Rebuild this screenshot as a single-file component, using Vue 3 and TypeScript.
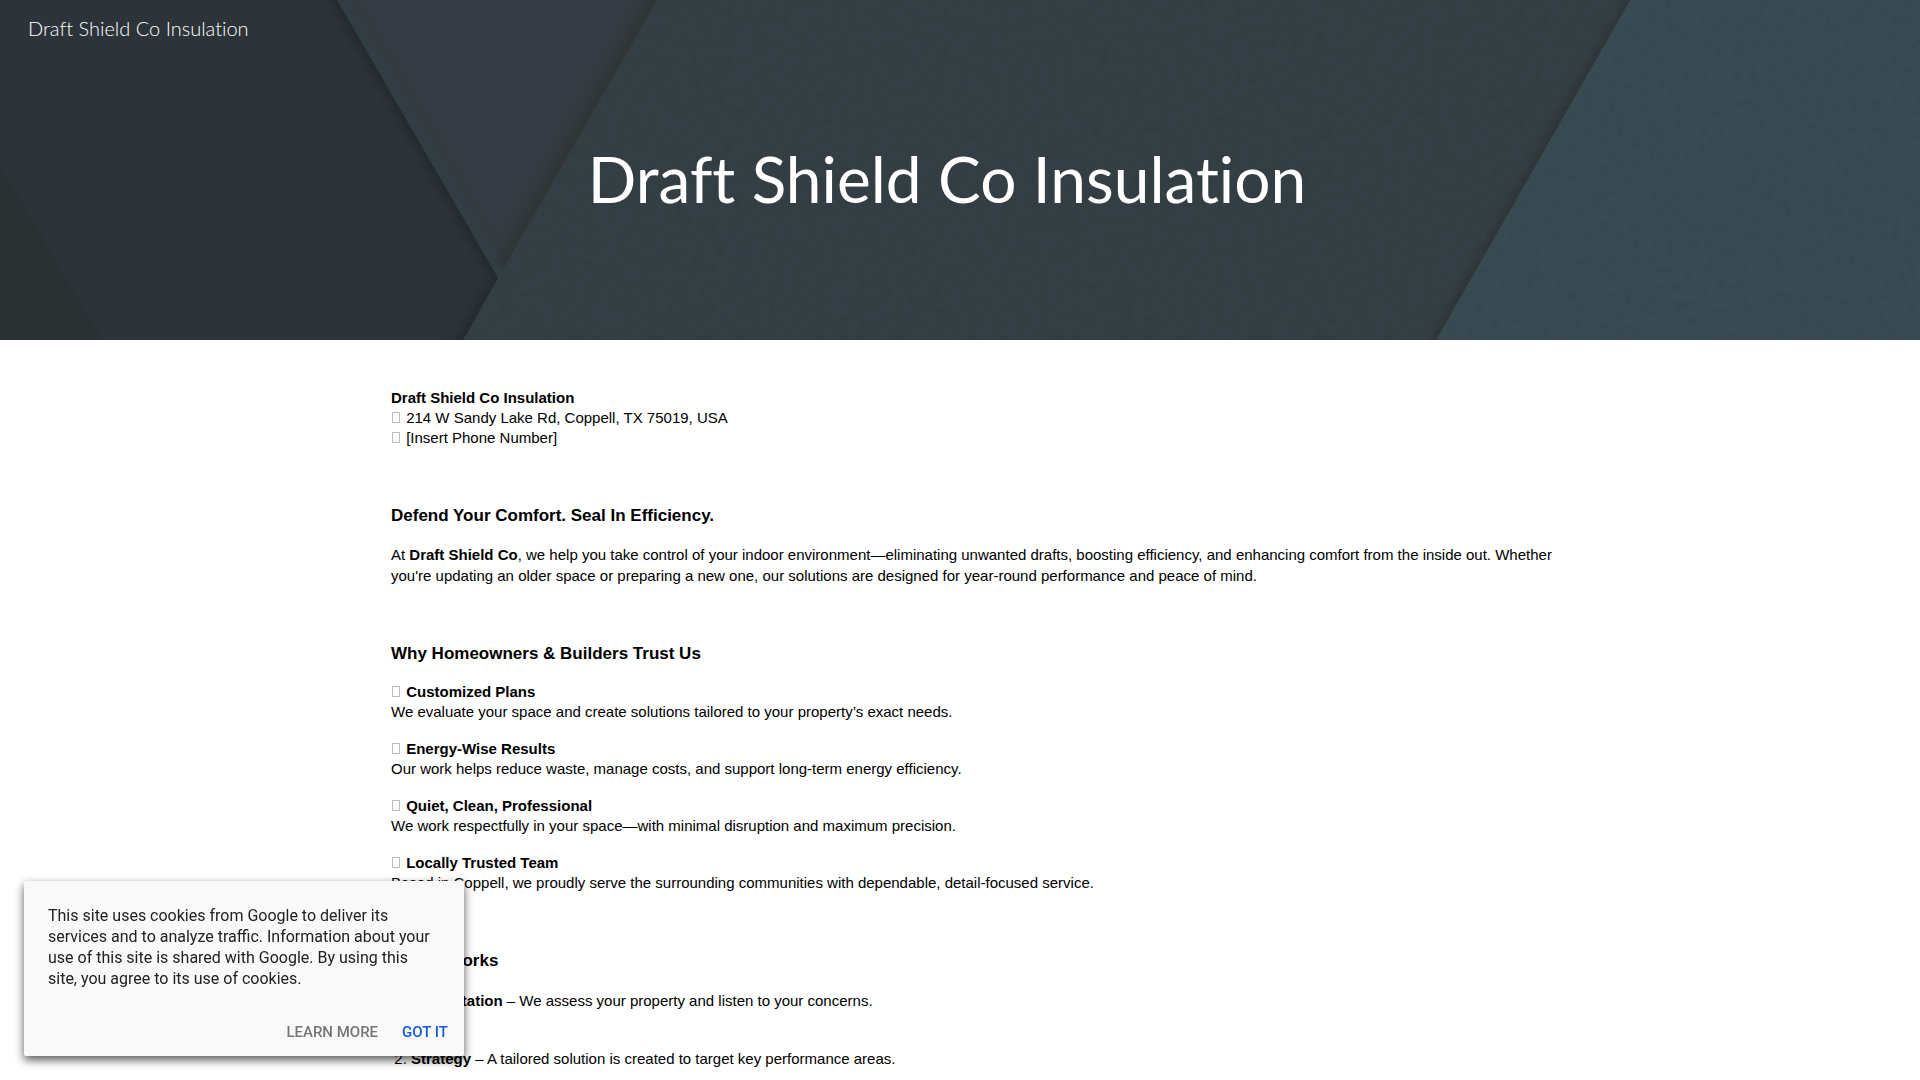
<script setup lang="ts">
import { ref } from 'vue'

interface Item {
  title: string
  text: string
}

const siteName = 'Draft Shield Co Insulation'
const showCookies = ref(true)

const contacts: string[] = ['214 W Sandy Lake Rd, Coppell, TX 75019, USA', '[Insert Phone Number]']

const features: Item[] = [
  { title: 'Customized Plans', text: 'We evaluate your space and create solutions tailored to your property’s exact needs.' },
  { title: 'Energy-Wise Results', text: 'Our work helps reduce waste, manage costs, and support long-term energy efficiency.' },
  { title: 'Quiet, Clean, Professional', text: 'We work respectfully in your space—with minimal disruption and maximum precision.' },
  { title: 'Locally Trusted Team', text: 'Based in Coppell, we proudly serve the surrounding communities with dependable, detail-focused service.' },
]

const steps: Item[] = [
  { title: 'Consultation', text: 'We assess your property and listen to your concerns.' },
  { title: 'Strategy', text: 'A tailored solution is created to target key performance areas.' },
]
</script>

<template>
  <div class="page">
    <header class="hero">
      <svg class="backdrop" viewBox="0 0 1920 340" preserveAspectRatio="none" aria-hidden="true">
        <defs>
          <filter id="soft" filterUnits="userSpaceOnUse" x="0" y="-60" width="1920" height="460" color-interpolation-filters="sRGB">
            <feGaussianBlur stdDeviation="5" />
          </filter>
          <filter id="grain" x="0" y="0" width="100%" height="100%">
            <feTurbulence type="fractalNoise" baseFrequency="0.12" numOctaves="3" seed="4" />
            <feColorMatrix values="0 0 0 0 0  0 0 0 0 0  0 0 0 0 0  0.9 0 0 0 -0.42" />
          </filter>
          <clipPath id="left"><path d="M0 0H337L498 278L463 340H0Z" /></clipPath>
          <clipPath id="wedge"><path d="M337 0H657L498 278Z" /></clipPath>
          <clipPath id="middle"><path d="M657 0H1630L1436 340H463Z" /></clipPath>
        </defs>
        <path d="M0 0H1920V340H0Z" fill="#384a52" />
        <path d="M657 0H1630L1436 340H463Z" fill="#343f45" />
        <g clip-path="url(#middle)">
          <path d="M1653 -40L1413 380" stroke="#2c3030" stroke-width="7" filter="url(#soft)" />
        </g>
        <path d="M657 0H1920V340H463Z" filter="url(#grain)" opacity=".1" />
        <path d="M337 0H657L498 278Z" fill="#343b42" />
        <g clip-path="url(#wedge)">
          <path d="M680 -40L498 278" stroke="#303534" stroke-width="16" filter="url(#soft)" />
          <path d="M314 -40L498 278" stroke="#303f45" stroke-width="16" filter="url(#soft)" />
        </g>
        <path d="M0 0H337L498 278L463 340H0Z" fill="#2c3339" />
        <g clip-path="url(#left)">
          <path d="M314 -40L498 278L440 380" fill="none" stroke="#22282a" stroke-width="10" filter="url(#soft)" />
        </g>
        <path d="M0 165L102 340H0Z" fill="#2a3133" />
      </svg>
      <a class="brand" href="#">{{ siteName }}</a>
      <h1>{{ siteName }}</h1>
    </header>

    <main class="content">
      <address>
        <strong>{{ siteName }}</strong>
        <span v-for="c in contacts" :key="c"><i class="icon" aria-hidden="true"></i> {{ c }}</span>
      </address>

      <section>
        <h2>Defend Your Comfort. Seal In Efficiency.</h2>
        <p class="intro">
          At <strong>Draft Shield Co</strong>, we help you take control of your indoor environment—eliminating unwanted drafts, boosting efficiency, and enhancing comfort from the inside out. Whether you're updating an older space or preparing a new one, our solutions are designed for year-round performance and peace of mind.
        </p>
      </section>

      <section>
        <h2>Why Homeowners &amp; Builders Trust Us</h2>
        <div class="features">
          <p v-for="f in features" :key="f.title">
            <i class="icon" aria-hidden="true"></i> <strong>{{ f.title }}</strong><br />{{ f.text }}
          </p>
        </div>
      </section>

      <section>
        <h2>How It Works</h2>
        <ol>
          <li v-for="s in steps" :key="s.title"><strong>{{ s.title }}</strong> – {{ s.text }}</li>
        </ol>
      </section>
    </main>

    <aside v-if="showCookies" class="cookies" aria-label="Cookie notice">
      <p>This site uses cookies from Google to deliver its services and to analyze traffic. Information about your use of this site is shared with Google. By using this site, you agree to its use of cookies.</p>
      <div class="actions">
        <a href="#">LEARN MORE</a>
        <button type="button" @click="showCookies = false">GOT IT</button>
      </div>
    </aside>
  </div>
</template>

<style>
body {
  margin: 0;
  background: #fff;
}
</style>

<style scoped>
.page {
  height: 100vh;
  overflow: hidden;
  font: 15px/20px "Liberation Sans", Arial, sans-serif;
  color: #000;
}

.hero {
  position: relative;
  box-sizing: border-box;
  height: 340px;
  padding: 16px 28px;
  color: #fff;
  font-family: Lato, sans-serif;
  font-variant-ligatures: none;
}

.backdrop {
  position: absolute;
  inset: 0;
  width: 100%;
  height: 100%;
}

.brand {
  position: relative;
  display: block;
  font-size: 20px;
  line-height: 24px;
  font-weight: 300;
  color: #fff;
  text-decoration: none;
}

h1 {
  position: relative;
  margin: 99px 26px 0 0;
  font-size: 64px;
  line-height: 80px;
  font-weight: 400;
  text-align: center;
}

.content {
  box-sizing: border-box;
  max-width: 1220px;
  margin-left: max(0px, calc(50% - 593px));
  padding: 48px 24px 0;
}

address {
  display: flex;
  flex-direction: column;
  font-style: normal;
}

.icon {
  display: inline-block;
  box-sizing: border-box;
  width: 8px;
  height: 11px;
  margin: 0 2px 0 1px;
  border: 1px solid #bdbdbd;
}

h2 {
  margin: 56px 0 16px;
  font-size: 17px;
  line-height: 24px;
  font-weight: 700;
}

p {
  margin: 0;
}

.intro {
  line-height: 21px;
}

.features {
  display: flex;
  flex-direction: column;
  gap: 17px;
}

ol {
  display: flex;
  flex-direction: column;
  gap: 38px;
  margin: 18px 0 0;
  padding-left: 20px;
}

.cookies {
  position: fixed;
  left: 24px;
  bottom: 24px;
  box-sizing: border-box;
  width: 440px;
  padding: 24px 16px 14px 24px;
  border-radius: 2px;
  background: #f9f9f9;
  box-shadow: 0 4px 10px rgba(0, 0, 0, 0.66);
  font: 16px/21px Roboto, sans-serif;
  color: #212121;
}

.cookies p {
  padding-right: 8px;
}

.actions {
  display: flex;
  justify-content: flex-end;
  gap: 24px;
  margin-top: 33px;
}

.actions a,
.actions button {
  padding: 0;
  border: 0;
  background: none;
  font: 500 15px/20px Roboto, sans-serif;
  color: #757575;
  text-decoration: none;
  cursor: pointer;
}

.actions button {
  color: #1558d6;
}
</style>
